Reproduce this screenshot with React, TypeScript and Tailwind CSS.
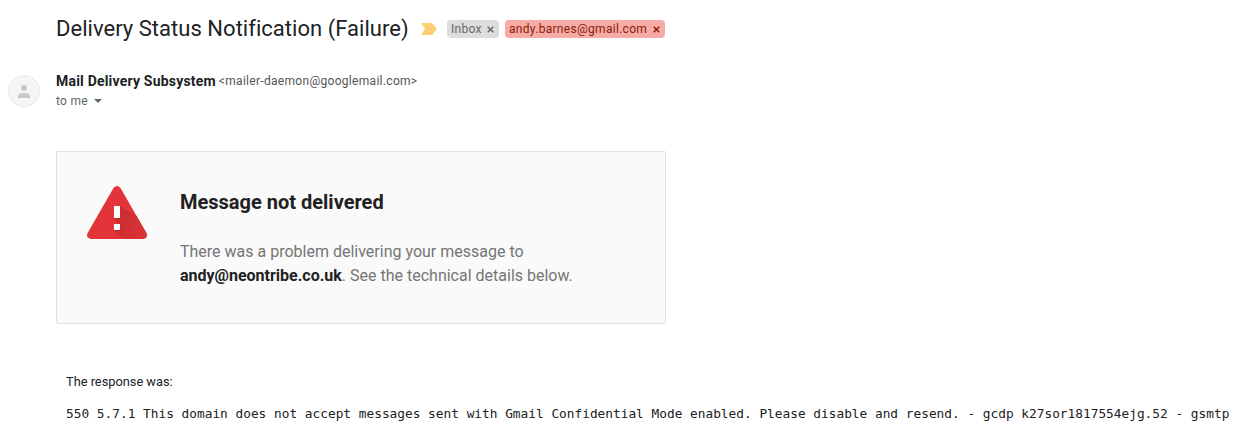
function PersonAvatar() {
  return (
    <svg className="mt-1 ml-2 h-8 w-8 shrink-0" viewBox="0 0 32 32">
      <circle cx="16" cy="16" r="15.5" fill="#f5f5f5" stroke="#e0e0e0" strokeDasharray="2 1" />
      <circle cx="16" cy="13" r="3" fill="#c9c9c9" />
      <path d="M10 23v-1.7c0-2.3 3.5-3.3 6-3.3s6 1 6 3.3V23z" fill="#c9c9c9" />
    </svg>
  )
}

function WarningIcon() {
  return (
    <svg className="h-[53px] w-[60px]" viewBox="0 0 60 53">
      <defs>
        <linearGradient id="shade" x1="30" y1="34" x2="54" y2="44" gradientUnits="userSpaceOnUse">
          <stop stopColor="#c92c30" />
          <stop offset="1" stopColor="#d93237" />
        </linearGradient>
      </defs>
      <path d="M26.5 2q3.5-4 7 0L59.4 47q2 4.4-3 6H3.6q-5-1.6-3-6z" fill="#e23439" />
      <path d="M33 20.5L49.5 30 59.4 47q2 4.4-3 6H36l-9-9 4-6-4-6z" fill="url(#shade)" />
      <path d="M27 20h6v12h-6zM27 38h6v6h-6z" fill="#fff" />
    </svg>
  )
}

function Cross({ color }: { color: string }) {
  return (
    <svg className="h-[7px] w-[7px]" viewBox="0 0 7 7">
      <path d="M.7.7l5.6 5.6M6.3.7L.7 6.3" stroke={color} strokeWidth="1.5" />
    </svg>
  )
}

export default function App() {
  return (
    <main className="h-[441px] w-[1248px] overflow-hidden bg-white font-['Roboto',sans-serif] text-[#202124]">
      <header className="flex h-[58px] items-center pl-14">
        <h1 className="w-[365px] text-[22px] leading-7 tracking-[0.03px] whitespace-nowrap">Delivery Status Notification (Failure)</h1>
        <svg className="h-3 w-4" viewBox="0 0 16 12"><path d="M0 0h11l5 6-5 6H0l4-6z" fill="#fbd074" /></svg>
        <div className="ml-[10px] flex h-[18px] w-[52px] items-center justify-between rounded bg-[#ddd] pr-[5px] pl-1 text-xs tracking-[0.3px] text-[#666]">Inbox<Cross color="#666" /></div>
        <div className="ml-[6px] flex h-[18px] w-[160px] items-center justify-between rounded bg-[#f6aba6] pr-[5px] pl-1 text-xs tracking-[0.3px] text-[#8a1c0a]">andy.barnes@gmail.com<Cross color="#8a1c0a" /></div>
      </header>
      <section className="flex h-[93px] pt-[13px]">
        <PersonAvatar />
        <div className="ml-4">
          <p className="flex h-5 items-center text-sm leading-5 font-bold tracking-[0.2px]">Mail Delivery Subsystem<span className="ml-[3px] text-xs leading-5 font-normal tracking-[0.3px] text-[#555]">&lt;mailer-daemon@googlemail.com&gt;</span></p>
          <p className="flex h-5 items-center text-xs leading-5 tracking-[0.3px] text-[#5f6368]">to me<svg className="ml-[6px] h-1 w-2" viewBox="0 0 8 4"><path d="M0 0h8L4 4z" fill="#666" /></svg></p>
        </div>
      </section>
      <section className="ml-14 flex h-[173px] w-[610px] rounded-[2px] border border-[#e0e0e0] bg-[#fafafa] pt-[34px] pl-[30px]">
        <WarningIcon />
        <div className="ml-[33px]">
          <h2 className="text-xl leading-8 font-bold text-[#212121]">Message not delivered</h2>
          <p className="mt-[22px] text-base leading-6 text-[#757575]">There was a problem delivering your message to<br /><b className="text-[#212121]">andy@neontribe.co.uk</b>. See the technical details below.</p>
        </div>
      </section>
      <section className="pt-[48px] pl-[66px]">
        <p className="text-[12.8px] leading-5">The response was:</p>
        <pre className="mt-3 font-['DejaVu_Sans_Mono',monospace] text-[12.8px] leading-5">550 5.7.1 This domain does not accept messages sent with Gmail Confidential Mode enabled. Please disable and resend. - gcdp k27sor1817554ejg.52 - gsmtp</pre>
      </section>
    </main>
  )
}
